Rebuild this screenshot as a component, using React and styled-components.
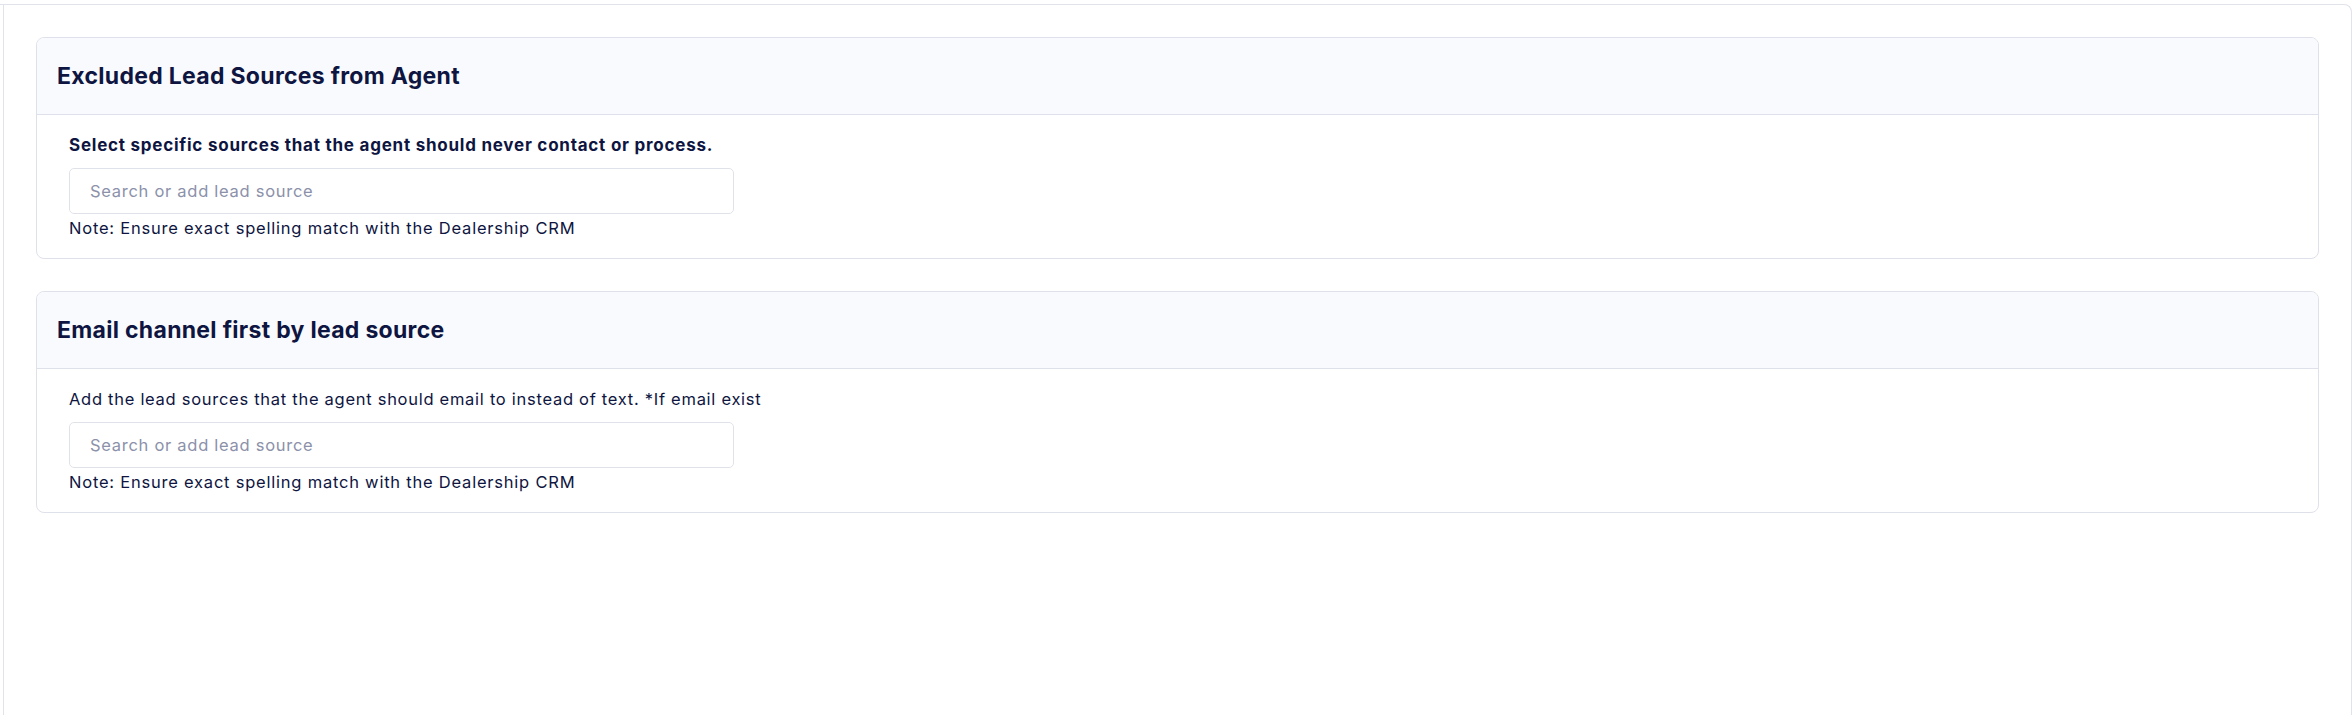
import styled, { createGlobalStyle } from "styled-components";

const GlobalStyle = createGlobalStyle`
  html, body {
    margin: 0;
    padding: 0;
    background: #fff;
  }
  body {
    font-family: Inter, "Noto Sans", sans-serif;
    color: #0e1541;
  }
`;

const Frame = styled.div({
  marginTop: "4px",
  borderTop: "1px solid #e1e3ea",
  borderRight: "1px solid #e1e3ea",
  borderTopRightRadius: "8px",
  paddingLeft: "3px",
  minHeight: "calc(100vh - 5px)",
  boxSizing: "border-box",
  display: "flex",
});

const Content = styled.div({
  flex: 1,
  borderLeft: "1px solid #e1e3ea",
  padding: "32px",
  display: "flex",
  flexDirection: "column",
  gap: "32px",
});

const Card = styled.section({
  border: "1px solid #dfe1ea",
  borderRadius: "8px",
  background: "#fff",
  overflow: "hidden",
});

const CardHeader = styled.header({
  height: "76px",
  display: "flex",
  alignItems: "center",
  padding: "0 20px",
  background: "#f9fafe",
  borderBottom: "1px solid #dfe1ea",
});

const Title = styled.h2({
  margin: 0,
  fontSize: "23px",
  fontWeight: 700,
  letterSpacing: "0.3px",
  color: "#0e1541",
});

const CardBody = styled.div({
  padding: "18px 32px 18px",
  display: "flex",
  flexDirection: "column",
});

const Description = styled.p`
  margin: 0 0 11px;
  font-size: ${(p) => (p.$bold ? "17px" : "16.5px")};
  line-height: 24px;
  font-weight: ${(p) => (p.$bold ? 700 : 400)};
  letter-spacing: ${(p) => (p.$bold ? "0.76px" : "0.72px")};
  color: #0e1541;
`;

const SourceInput = styled.input({
  width: "665px",
  height: "46px",
  boxSizing: "border-box",
  border: "1px solid #e0e2ea",
  borderRadius: "5px",
  padding: "0 20px",
  fontFamily: "Inter, sans-serif",
  fontSize: "16.5px",
  letterSpacing: "0.72px",
  color: "#0e1541",
  outline: "none",
  "&::placeholder": {
    color: "#8c91aa",
  },
});

const Note = styled.div({
  marginTop: "2px",
  fontSize: "16.5px",
  lineHeight: "24px",
  letterSpacing: "0.78px",
  color: "#0e1541",
});

const sections = [
  {
    title: "Excluded Lead Sources from Agent",
    text: "Select specific sources that the agent should never contact or process.",
    bold: true,
  },
  {
    title: "Email channel first by lead source",
    text: "Add the lead sources that the agent should email to instead of text. *If email exist",
    bold: false,
  },
];

export default function App() {
  return (
    <>
      <GlobalStyle />
      <Frame>
        <Content>
          {sections.map((s) => (
            <Card key={s.title}>
              <CardHeader>
                <Title>{s.title}</Title>
              </CardHeader>
              <CardBody>
                <Description $bold={s.bold}>{s.text}</Description>
                <SourceInput placeholder="Search or add lead source" />
                <Note>Note: Ensure exact spelling match with the Dealership CRM</Note>
              </CardBody>
            </Card>
          ))}
        </Content>
      </Frame>
    </>
  );
}
